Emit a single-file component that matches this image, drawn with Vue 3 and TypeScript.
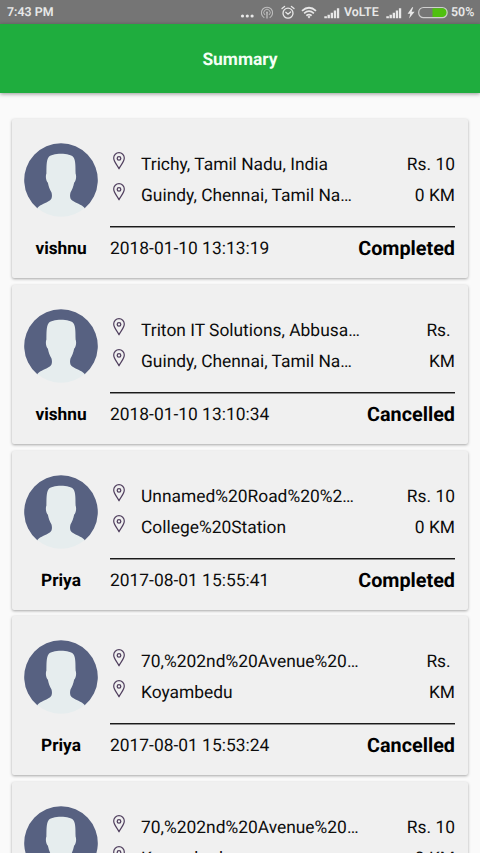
<script setup lang="ts">
interface Ride {
  name: string
  from: string
  to: string
  fare: string
  distance: string
  date: string
  status: string
}

const rides: Ride[] = [
  { name: 'vishnu', from: 'Trichy, Tamil Nadu, India', to: 'Guindy, Chennai, Tamil Na…', fare: 'Rs. 10', distance: '0 KM', date: '2018-01-10 13:13:19', status: 'Completed' },
  { name: 'vishnu', from: 'Triton IT Solutions, Abbusa…', to: 'Guindy, Chennai, Tamil Na…', fare: 'Rs. ', distance: ' KM', date: '2018-01-10 13:10:34', status: 'Cancelled' },
  { name: 'Priya', from: 'Unnamed%20Road%20%2…', to: 'College%20Station', fare: 'Rs. 10', distance: '0 KM', date: '2017-08-01 15:55:41', status: 'Completed' },
  { name: 'Priya', from: '70,%202nd%20Avenue%20…', to: 'Koyambedu', fare: 'Rs. ', distance: ' KM', date: '2017-08-01 15:53:24', status: 'Cancelled' },
  { name: '', from: '70,%202nd%20Avenue%20…', to: 'Koyambedu', fare: 'Rs. 10', distance: '0 KM', date: '', status: '' },
]
</script>

<template>
  <div class="screen">
    <div class="statusbar">
      <span class="time">7:43 PM</span>
      <svg class="dots" width="14" height="16" viewBox="0 0 14 16"><g fill="#e8e8e8"><circle cx="2.5" cy="11" r="1.6" /><circle cx="7.3" cy="11" r="1.6" /><circle cx="12.1" cy="11" r="1.6" /></g></svg>
      <svg class="hotspot" width="14" height="16" viewBox="0 0 14 16" fill="none" stroke="#bdbdbd">
        <path d="M4.3 12.7A5.6 5.6 0 1 1 9.7 12.7" stroke-width="1.1" />
        <path d="M5 10A3.2 3.2 0 1 1 9 10" stroke-width="1" />
        <circle cx="7" cy="7.5" r="1" fill="#bdbdbd" stroke="none" />
        <path d="M7 8V13.5" stroke-width="1.3" />
      </svg>
      <svg class="alarm" width="14" height="16" viewBox="0 0 14 16" fill="none" stroke="#e8e8e8" stroke-width="1.3" stroke-linecap="round">
        <circle cx="7" cy="8.2" r="5" />
        <path d="M1 3.5L3.6 1.5M13 3.5L10.4 1.5M4.8 7.3L7 9.2L9.6 6.9" />
      </svg>
      <svg class="wifi" width="16" height="16" viewBox="0 0 16 16" fill="none" stroke="#e8e8e8" stroke-width="1.7">
        <path d="M1 5.8Q8 -.3 15 5.8M3.1 8.3Q8 4.1 12.9 8.3M5.3 10.7Q8 8.5 10.7 10.7" />
        <path d="M8 13.5L6.5 11.7Q8 10.5 9.5 11.7Z" fill="#e8e8e8" stroke="none" />
      </svg>
      <svg class="signal" width="16" height="16" viewBox="0 0 16 16" fill="#e8e8e8">
        <path d="M.3 11.3h2.6v2H.3zM3.5 9.8h2.4v3.5H3.5zM6.7 7.8H9v5.5H6.7zM9.8 5.6h2.3v7.7H9.8zM12.9 3.3h2.3v10h-2.3z" />
      </svg>
      <span class="volte">VoLTE</span>
      <svg class="signal second" width="16" height="16" viewBox="0 0 16 16" fill="#e8e8e8">
        <path d="M.3 11.3h2.6v2H.3zM3.5 9.8h2.4v3.5H3.5zM6.7 7.8H9v5.5H6.7zM9.8 5.6h2.3v7.7H9.8zM12.9 3.3h2.3v10h-2.3z" />
      </svg>
      <svg class="bolt" width="8" height="16" viewBox="0 0 8 16"><path d="M5.2 2.3L.6 8.8H3.3L2.1 13.6L7.6 6.7H4.6L6.2 2.3Z" fill="#e8e8e8" /></svg>
      <svg class="battery" width="30" height="16" viewBox="0 0 30 16">
        <path d="M14.5 3.2H25.3A4.3 4.3 0 0 1 25.3 12H14.5Z" fill="#4fc010" />
        <rect x=".7" y="2.5" width="28.4" height="10.2" rx="4.8" fill="none" stroke="#cfcfcf" stroke-width="1.2" />
      </svg>
      <span class="percent">50%</span>
    </div>

    <header class="appbar">Summary</header>

    <main class="list">
      <article v-for="(ride, index) in rides" :key="index" class="card">
        <div class="person">
          <svg class="avatar" width="74" height="74" viewBox="0 0 74 74">
            <path d="M13.3 65.2A36.8 36.8 0 1 1 60.7 65.2L37 55Z" fill="#576181" />
            <path d="M13.3 65C16.5 61.5 22.5 60 25.8 57.6C28.4 55.5 28.2 52.2 27.5 49.5C25.8 46.6 24.6 43.6 23.9 39.8C22.2 37.6 21.2 33.8 22.4 30.6C22.5 23.3 22.4 17.8 24.4 14.6C27.4 9.6 46.6 9.6 49.6 14.6C51.6 17.8 51.5 23.3 51.6 30.6C52.8 33.8 51.8 37.6 50.1 39.8C49.4 43.6 48.2 46.6 46.5 49.5C45.8 52.2 45.6 55.5 48.2 57.6C51.5 60 57.5 61.5 60.7 65A36.8 36.8 0 0 1 13.3 65Z" fill="#e6edee" />
          </svg>
          <span v-if="ride.name" class="name">{{ ride.name }}</span>
        </div>
        <div class="details">
          <div class="trip">
            <div v-for="(place, stop) in [ride.from, ride.to]" :key="stop" class="stop">
              <svg class="pin" width="12" height="18" viewBox="0 0 12 18" fill="none" stroke="#51405f">
                <path d="M6 16.8C4.9 13.8.7 9.8.7 6A5.3 5.3 0 0 1 11.3 6C11.3 9.8 7.1 13.8 6 16.8Z" stroke-width="1.2" stroke-linejoin="round" />
                <circle cx="6" cy="6.4" r="1.8" stroke-width="1.3" />
              </svg>
              <span class="place">{{ place }}</span>
              <span class="amount">{{ stop === 0 ? ride.fare : ride.distance }}</span>
            </div>
          </div>
          <div v-if="ride.date" class="summary">
            <span>{{ ride.date }}</span>
            <strong class="status">{{ ride.status }}</strong>
          </div>
        </div>
      </article>
    </main>
  </div>
</template>

<style>
body {
  background: #fafafa;
  overflow: hidden;
}
</style>

<style scoped>
.screen {
  height: 853px;
  overflow: hidden;
  display: flex;
  flex-direction: column;
  background: #fafafa;
  color: #0c0c0c;
  font-family: Roboto, sans-serif;
  text-rendering: geometricPrecision;
}
.statusbar {
  height: 24px;
  flex: none;
  box-sizing: border-box;
  display: flex;
  align-items: center;
  padding: 1px 6px 0 7px;
  background: #757575;
  color: #e8e8e8;
  font-size: 12.4px;
  font-weight: 600;
  line-height: 24px;
  white-space: nowrap;
}
.statusbar svg {
  flex: none;
}
.time {
  flex: none;
  width: 233px;
}
.hotspot {
  margin-left: 6px;
}
.alarm {
  margin-left: 6.5px;
}
.wifi {
  margin-left: 6.5px;
}
.signal {
  margin-left: 7px;
}
.volte {
  flex: none;
  width: 35px;
  margin-left: 4px;
}
.bolt {
  margin-left: 5px;
}
.battery {
  margin-left: 3px;
}
.percent {
  margin-left: 3px;
}
.appbar {
  height: 69px;
  flex: none;
  background: #1fad3e;
  box-shadow: 0 1px 4px rgba(0, 0, 0, 0.4);
  color: #f4fff5;
  font-size: 17.4px;
  font-weight: 700;
  line-height: 73px;
  text-align: center;
}
.list {
  display: flex;
  flex-direction: column;
  gap: 6.75px;
  padding: 26px 12px 0;
}
.card {
  height: 159px;
  flex: none;
  display: flex;
  border-radius: 2px;
  background: #f0f0f0;
  box-shadow: 0 1px 3px rgba(0, 0, 0, 0.34);
  font-size: 17.4px;
  white-space: nowrap;
}
.person {
  width: 98px;
  flex: none;
  display: flex;
  flex-direction: column;
  align-items: center;
  padding-top: 24px;
}
.name {
  margin-top: 19px;
  color: #000;
  font-size: 17.3px;
  font-weight: 700;
  line-height: 27px;
}
.details {
  flex: 1;
  padding: 30px 13px 0 0;
}
.trip {
  height: 77px;
  border-bottom: 1px solid #1b1b1b;
  box-shadow: 0 1px 0 #8c8c8c;
}
.stop {
  height: 31px;
  display: flex;
  line-height: 33px;
}
.pin {
  flex: none;
  margin: 3px 16px 0 3px;
}
.place {
  flex: 1;
}
.amount {
  white-space: pre;
}
.summary {
  display: flex;
  justify-content: space-between;
  height: 24px;
  margin-top: 9px;
  line-height: 27px;
}
.status {
  color: #000;
  font-size: 19.8px;
  font-weight: 700;
  line-height: 25px;
}
</style>
